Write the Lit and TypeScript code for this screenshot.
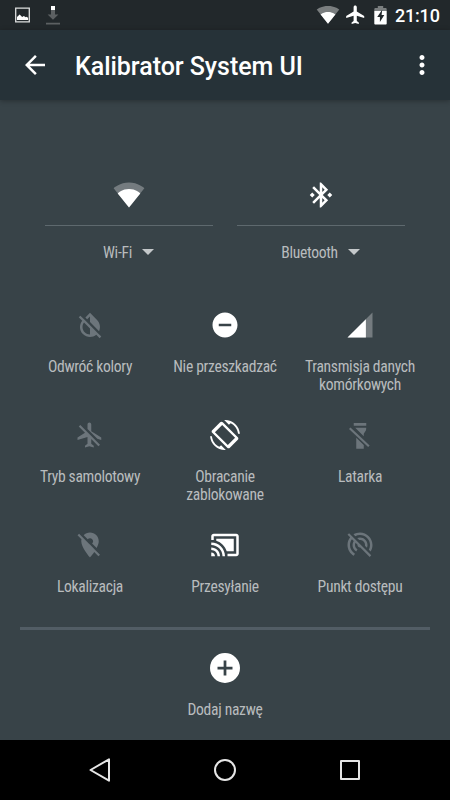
import { LitElement, html, svg, css } from "lit";
import { customElement, property } from "lit/decorators.js";

const ICONS: Record<string, unknown> = {
  wifi: svg`<path opacity=".3" d="M12 22L24.3 6.5C23.8 6.1 19.2 2 12 2S.2 6.1-.3 6.5z"/><path d="M12 22L21 10.7C20.6 10.3 17.3 7.2 12 7.2S3.4 10.3 3 10.7z"/>`,
  bluetooth: svg`<path d="M7 12l-2-2-2 2 2 2 2-2zm10.71-4.29L12 2h-1v7.59L6.41 5 5 6.41 10.59 12 5 17.59 6.41 19 11 14.41V22h1l5.71-5.71-4.3-4.29 4.3-4.29zM13 5.83l1.88 1.88L13 9.59V5.83zm1.88 10.46L13 18.17v-3.76l1.88 1.88zM19 10l-2 2 2 2 2-2-2-2z"/>`,
  invert: svg`<path d="M20.65 20.87l-2.35-2.35-6.3-6.29-3.56-3.57-1.42-1.41L4.27 4.5 3 5.77l2.78 2.78c-2.55 3.14-2.36 7.76.56 10.69C7.9 20.8 9.95 21.58 12 21.58c1.79 0 3.57-.59 5.03-1.78l2.7 2.7L21 21.23l-.35-.36zM12 19.59c-1.6 0-3.11-.62-4.24-1.76C6.62 16.69 6 15.19 6 13.59c0-1.32.43-2.57 1.21-3.6L12 14.77v4.82zM12 5.1v4.58l7.25 7.26c1.37-2.96.84-6.57-1.6-9.01L12 2.27l-3.7 3.7 1.41 1.41L12 5.1z"/>`,
  dnd: svg`<path d="M12 2C6.48 2 2 6.48 2 12s4.48 10 10 10 10-4.48 10-10S17.52 2 12 2zm5 11H7v-2h10v2z"/>`,
  signal: svg`<path opacity=".3" d="M2 22h20V2z"/><path d="M2 22h14.7V7.3z"/>`,
  airplaneOff: svg`<path d="M13 9V3.5c0-.83-.67-1.5-1.5-1.5S10 2.67 10 3.5v3.68l7.83 7.83L21 16v-2l-8-5zM3 5.27l4.99 4.99L2 14v2l8-2.5V19l-2 1.5V22l3.5-1 3.5 1v-1.5L13 19v-3.73L18.73 21 20 19.73 4.27 4 3 5.27z"/>`,
  rotation: svg`<path d="M16.48 2.52c3.27 1.55 5.61 4.72 5.97 8.48h1.5C23.44 4.84 18.29 0 12 0l-.66.03 3.81 3.81 1.33-1.32zm-6.25-.77c-.59-.59-1.54-.59-2.12 0L1.75 8.11c-.59.59-.59 1.54 0 2.12l12.02 12.02c.59.59 1.54.59 2.12 0l6.36-6.36c.59-.59.59-1.54 0-2.12L10.23 1.75zM14.26 20.06L3.94 9.74 9.74 3.94 20.06 14.26zM7.52 21.48C4.25 19.94 1.91 16.76 1.55 13H.05C.56 19.16 5.71 24 12 24l.66-.03-3.81-3.81-1.33 1.32z"/>`,
  flashlightOff: svg`<path d="M7 2.4h10v2.2H7zM8.2 6.2H17L16.8 8.2 15 11v2zM3.2 7.2l1.2-1.2L19.7 20.3l-1.2 1.2zM9 14.2l6 5.7V23H9z"/>`,
  locationOff: svg`<path d="M12 6.5c1.38 0 2.5 1.12 2.5 2.5 0 .74-.33 1.39-.83 1.85l3.63 3.63c.98-1.86 1.7-3.8 1.7-5.48 0-3.87-3.13-7-7-7-1.98 0-3.76.83-5.04 2.15l3.19 3.19c.46-.52 1.11-.84 1.85-.84zm4.37 9.6l-4.63-4.63-.11-.11L3.27 3 2 4.27l3.18 3.18C5.07 7.95 5 8.47 5 9c0 5.25 7 13 7 13s1.67-1.85 3.38-4.35L18.73 21 20 19.73l-3.63-3.63z"/>`,
  cast: svg`<path d="M1 18v3h3c0-1.66-1.34-3-3-3zm0-4v2c2.76 0 5 2.24 5 5h2c0-3.87-3.13-7-7-7zm18-7H5v1.63c3.96 1.28 7.09 4.41 8.37 8.37H19V7zM1 10v2c4.97 0 9 4.03 9 9h2c0-6.08-4.93-11-11-11zm20-7H3c-1.1 0-2 .9-2 2v3h2V5h18v14h-7v2h7c1.1 0 2-.9 2-2V5c0-1.1-.9-2-2-2z"/>`,
  hotspotOff: svg`<path d="M17.56 14.24c.28-.69.44-1.45.44-2.24 0-3.31-2.69-6-6-6-.79 0-1.55.16-2.24.44l1.62 1.62c.2-.03.41-.06.62-.06 2.21 0 4 1.79 4 4 0 .21-.02.42-.05.63l1.61 1.61zM12 4c4.42 0 8 3.58 8 8 0 1.35-.35 2.62-.95 3.74l1.47 1.47C21.46 15.69 22 13.91 22 12c0-5.52-4.48-10-10-10-1.91 0-3.69.55-5.21 1.47l1.46 1.46C9.37 4.34 10.65 4 12 4zM3.27 2.5L2 3.77l2.1 2.1C2.79 7.57 2 9.69 2 12c0 3.7 2.01 6.92 4.99 8.65l1-1.73C5.61 17.53 4 14.96 4 12c0-1.76.57-3.38 1.53-4.69l1.43 1.44C6.36 9.68 6 10.8 6 12c0 2.22 1.21 4.15 3 5.19l1-1.74c-1.19-.7-2-1.97-2-3.45 0-.65.17-1.25.44-1.79l1.58 1.58L10 12c0 1.1.9 2 2 2l.21-.02.01.01 7.51 7.51L21 20.23 4.27 3.5l-1-1z"/>`,
  add: svg`<path d="M12 0a12 12 0 1 0 0 24 12 12 0 0 0 0-24zm6 13.1h-4.9V18h-2.2v-4.9H6v-2.2h4.9V6h2.2v4.9H18z"/>`,
};

@customElement("qs-tile")
class QsTile extends LitElement {
  @property() icon = "";
  @property({ attribute: false }) lines: string[] = [];
  @property({ type: Boolean }) off = false;

  static styles = css`
    :host { display: flex; flex-direction: column; align-items: center; }
    svg { display: block; width: 30px; height: 30px; overflow: visible; fill: #fff; }
    .off { fill: #6c757b; }
    .label { margin-top: 18px; text-align: center; white-space: nowrap; }
    .line { line-height: 18px; }
  `;

  render() {
    return html`
      <svg class=${this.off ? "off" : ""} viewBox="0 0 24 24">${ICONS[this.icon]}</svg>
      <div class="label">${this.lines.map((l) => html`<div class="line">${l}</div>`)}</div>
    `;
  }
}

const TILES = [
  { icon: "invert", lines: ["Odwróć kolory"], off: true },
  { icon: "dnd", lines: ["Nie przeszkadzać"], off: false },
  { icon: "signal", lines: ["Transmisja danych", "komórkowych"], off: false },
  { icon: "airplaneOff", lines: ["Tryb samolotowy"], off: true },
  { icon: "rotation", lines: ["Obracanie", "zablokowane"], off: false },
  { icon: "flashlightOff", lines: ["Latarka"], off: true },
  { icon: "locationOff", lines: ["Lokalizacja"], off: true },
  { icon: "cast", lines: ["Przesyłanie"], off: false },
  { icon: "hotspotOff", lines: ["Punkt dostępu"], off: true },
];

@customElement("app-root")
class AppRoot extends LitElement {
  static styles = css`
    :host {
      display: flex; flex-direction: column; width: 450px; height: 800px; overflow: hidden;
      background: #384348; color: #b8bcbe;
      font-family: "Roboto Condensed", Roboto, sans-serif; font-size: 15.6px; font-stretch: 75%;
      letter-spacing: -0.3px;
    }
    svg { display: block; fill: #fff; }
    .status {
      height: 30px; flex: none; display: flex; align-items: center; background: #22282b;
      padding: 0 10px 0 14px; color: #fff;
    }
    .notes { flex: 1; display: flex; }
    .clock {
      font: 500 18px/30px Roboto, sans-serif; font-stretch: 100%; letter-spacing: -0.2px;
      margin-left: 8px; padding-top: 1px; width: 45px; white-space: nowrap;
    }
    .bar {
      height: 70px; flex: none; display: flex; align-items: center; background: #263238;
      box-shadow: 0 1px 5px rgba(0, 0, 0, 0.3); color: #fff; padding: 0 13px 0 20px;
    }
    .title {
      flex: 1; margin-left: 25px; padding-top: 4px; letter-spacing: -0.04px;
      font: 500 25px/30px Roboto, sans-serif; font-stretch: 100%; white-space: nowrap;
    }
    .panel { flex: 1; display: flex; flex-direction: column; }
    .duals { display: grid; grid-template-columns: 168px 168px; gap: 24px; padding: 80px 0 0 45px; }
    .dual { display: flex; flex-direction: column; align-items: center; }
    .dual svg.big { width: 30px; height: 30px; overflow: visible; }
    .rule { align-self: stretch; height: 1px; background: #5e696e; margin: 15px 0 18px; }
    .name { display: flex; align-items: center; gap: 10px; line-height: 18px; margin-right: 1px; }
    .name svg { fill: #c4c8ca; margin-top: -2px; }
    .grid { display: grid; grid-template-columns: repeat(3, 135px); grid-auto-rows: 110px; padding: 48px 22.5px 0; }
    .divider { height: 3px; margin: -13px 20px 0; background: #525d65; }
    .more { margin-top: 23px; }
    .nav { height: 60px; flex: none; background: #000; }
    .nav svg { fill: none; stroke: #e6e6e6; stroke-width: 2; stroke-linejoin: round; }
  `;

  private dual(icon: string, name: string) {
    return html`<div class="dual">
      <svg class="big" viewBox="0 0 24 24">${ICONS[icon]}</svg>
      <div class="rule"></div>
      <div class="name"><span>${name}</span><svg width="12" height="6" viewBox="0 0 12 6"><path d="M0 0h12L6 6z"/></svg></div>
    </div>`;
  }

  render() {
    return html`
      <div class="status">
        <svg class="notes" width="200" height="30" viewBox="14 0 200 30" preserveAspectRatio="xMinYMid meet">
          <path fill="none" stroke="#dedfdf" stroke-width="1.3" d="M15.7 8.2h13.6v13.6H15.7z"/>
          <path d="M17 20v-3l2.6-2.4 2.6 2.4 1.6-1 2 1.2 1-.4 1.3 1.2v2z"/>
          <path fill="#5c6062" d="M51 10h4v4.4h3.4L53 19.8l-5.4-5.4H51zM46 22.8h14v1.6H46z"/>
          <path d="M51 6h4v4h-4z"/>
        </svg>
        <svg width="71" height="30" viewBox="316 0 71 30">
          <path opacity=".4" d="M328 23.8L339.3 9.6C338.3 8.8 334.4 6 328 6s-10.3 2.8-11.3 3.6z"/>
          <path d="M328 23.8l7.4-9.3C334.9 14 332 12 328 12s-6.9 2-7.4 2.5z"/>
          <path d="M364.2 18v-1.9l-7.4-4.7V7.2c0-.9-.7-1.6-1.6-1.6s-1.6.7-1.6 1.6v4.2l-7.4 4.7V18l7.4-2.3v5.3l-2 1.5v1.5l3.6-1 3.6 1v-1.5l-2-1.5v-5.3z"/>
          <path opacity=".4" d="M374.3 11V9.2c0-.7.5-1.2 1.2-1.2h2.3V6h5.4v2h2.3c.7 0 1.2.5 1.2 1.2V11z"/>
          <path d="M374.3 11h12.4v12.4c0 .7-.5 1.1-1.2 1.1h-10c-.7 0-1.2-.4-1.2-1.1z"/>
          <path fill="#22282b" d="M382.2 9.8l-5 7.3h2.7v4.8l4.4-7h-2.7z"/>
        </svg>
        <div class="clock">21:10</div>
      </div>
      <div class="bar">
        <svg width="30" height="30" viewBox="0 0 24 24"><path d="M20 11H7.83l5.59-5.59L12 4l-8 8 8 8 1.41-1.41L7.83 13H20v-2z"/></svg>
        <div class="title">Kalibrator System UI</div>
        <svg width="30" height="30" viewBox="0 0 24 24"><path d="M12 8c1.1 0 2-.9 2-2s-.9-2-2-2-2 .9-2 2 .9 2 2 2zm0 2c-1.1 0-2 .9-2 2s.9 2 2 2 2-.9 2-2-.9-2-2-2zm0 6c-1.1 0-2 .9-2 2s.9 2 2 2 2-.9 2-2-.9-2-2-2z"/></svg>
      </div>
      <div class="panel">
        <div class="duals">${this.dual("wifi", "Wi-Fi")}${this.dual("bluetooth", "Bluetooth")}</div>
        <div class="grid">
          ${TILES.map((t) => html`<qs-tile .icon=${t.icon} .lines=${t.lines} .off=${t.off}></qs-tile>`)}
        </div>
        <div class="divider"></div>
        <qs-tile class="more" .icon=${"add"} .lines=${["Dodaj nazwę"]}></qs-tile>
      </div>
      <div class="nav">
        <svg width="450" height="60" viewBox="0 0 450 60">
          <path d="M109 19.3v21.4L90.5 30z"/>
          <circle cx="225" cy="30" r="10"/>
          <path d="M341 21h18v18h-18z"/>
        </svg>
      </div>
    `;
  }
}
